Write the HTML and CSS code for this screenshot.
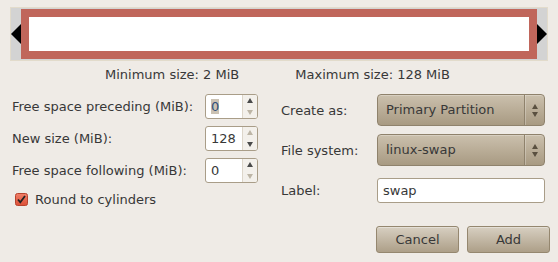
FILE: index.html
```html
<!DOCTYPE html>
<html lang="en">
<head>
    <meta charset="UTF-8">
    <title>Create new Partition</title>
    <link rel="stylesheet" href="styles.css">
</head>
<body>
    <div class="bar">
        <div class="handle">
            <svg width="10" height="20" viewBox="0 0 10 20"><polygon points="10,0 10,20 0,10" fill="#000"/></svg>
        </div>
        <div class="partition"></div>
        <div class="handle">
            <svg width="10" height="20" viewBox="0 0 10 20"><polygon points="0,0 0,20 10,10" fill="#000"/></svg>
        </div>
    </div>

    <div class="limits">
        <span>Minimum size: 2 MiB</span>
        <span>Maximum size: 128 MiB</span>
    </div>

    <div class="form">
        <div class="col-left">
            <div class="grid-left">
                <label>Free space preceding (MiB):</label>
                <div class="spin">
                    <span class="spin-value"><span class="selected">0</span></span>
                    <span class="spin-arrows"><i class="up"></i><i class="down off"></i></span>
                </div>
                <label>New size (MiB):</label>
                <div class="spin">
                    <span class="spin-value">128</span>
                    <span class="spin-arrows"><i class="up off"></i><i class="down"></i></span>
                </div>
                <label>Free space following (MiB):</label>
                <div class="spin">
                    <span class="spin-value">0</span>
                    <span class="spin-arrows"><i class="up"></i><i class="down off"></i></span>
                </div>
            </div>
            <div class="check">
                <svg width="13" height="13" viewBox="0 0 13 13">
                    <defs>
                        <linearGradient id="cb" x1="0" y1="0" x2="0" y2="1">
                            <stop offset="0" stop-color="#f0806a"/>
                            <stop offset="1" stop-color="#dc4f36"/>
                        </linearGradient>
                    </defs>
                    <rect x="0.5" y="0.5" width="12" height="12" rx="2" fill="url(#cb)" stroke="#b8432e"/>
                    <path d="M3 6.5 L5.3 9.3 L10 3" fill="none" stroke="#222" stroke-width="1.8"/>
                </svg>
                <span>Round to cylinders</span>
            </div>
        </div>

        <div class="col-right">
            <div class="grid-right">
                <label>Create as:</label>
                <div class="combo">
                    <span class="combo-text">Primary Partition</span>
                    <span class="combo-arrows"><i class="up"></i><i class="down"></i></span>
                </div>
                <label>File system:</label>
                <div class="combo">
                    <span class="combo-text">linux-swap</span>
                    <span class="combo-arrows"><i class="up"></i><i class="down"></i></span>
                </div>
                <label class="label-row">Label:</label>
                <div class="entry label-row">swap</div>
            </div>
        </div>
    </div>

    <div class="actions">
        <button>Cancel</button>
        <button>Add</button>
    </div>
</body>
</html>
```

FILE: styles.css
```css
body {
    margin: 0;
    background-color: #efebe6;
    font-family: "DejaVu Sans", sans-serif;
    font-size: 13px;
    color: #383838;
}
.bar {
    display: flex;
    margin: 7px 10px 0 10px;
    height: 54px;
    box-sizing: border-box;
    border: 1px solid #e2dbcb;
    background-color: #d3d3d3;
}
.handle {
    width: 10px;
    display: flex;
    align-items: center;
}
.partition {
    flex: 1;
    margin: 1px 0;
    border: 8px solid #c0665b;
    background-color: #fff;
}
.limits {
    display: flex;
    gap: 56px;
    margin: 6px 0 0 105px;
    line-height: 16px;
}
.form {
    display: flex;
    margin-top: 11px;
}
.col-left {
    width: 269px;
    padding-left: 12px;
}
.grid-left {
    display: grid;
    grid-template-columns: 193px 53px;
    grid-auto-rows: 25px;
    row-gap: 7px;
    align-items: center;
}
.grid-right {
    display: grid;
    grid-template-columns: 96px 168px;
    grid-template-rows: 32px 32px 25px;
    row-gap: 8px;
    align-items: center;
}
.label-row {
    margin-top: 8px;
}
.spin {
    display: flex;
    height: 25px;
    box-sizing: border-box;
    border: 1px solid #a99d88;
    border-radius: 3px;
    background-color: #fff;
    overflow: hidden;
}
.spin-value {
    flex: 1;
    padding-left: 5px;
    line-height: 23px;
}
.selected {
    background-color: #cbc2b3;
    color: #2f4f7a;
}
.spin-arrows {
    width: 14px;
    border-left: 1px solid #ddd6ca;
    background-color: #f3f0eb;
    display: flex;
    flex-direction: column;
    align-items: center;
    justify-content: center;
    gap: 7px;
}
.up, .down {
    display: block;
    width: 0;
    height: 0;
    border-left: 3px solid transparent;
    border-right: 3px solid transparent;
}
.up {
    border-bottom: 5px solid #4a4a4a;
}
.down {
    border-top: 5px solid #4a4a4a;
}
.up.off {
    border-bottom-color: #bdb5a6;
}
.down.off {
    border-top-color: #bdb5a6;
}
.check {
    display: flex;
    align-items: center;
    gap: 7px;
    margin: 10px 0 0 3px;
    height: 13px;
}
.check svg {
    flex: none;
}
.combo {
    display: flex;
    height: 32px;
    box-sizing: border-box;
    border: 1px solid #8f826c;
    border-radius: 4px;
    background: linear-gradient(#cbc0ad, #a89a82);
    box-shadow: inset 0 1px rgba(255, 255, 255, 0.25);
}
.combo-text {
    flex: 1;
    padding-left: 8px;
    line-height: 30px;
}
.combo-arrows {
    width: 19px;
    border-left: 1px solid #8f826c;
    box-shadow: inset 1px 0 rgba(255, 255, 255, 0.25);
    display: flex;
    flex-direction: column;
    align-items: center;
    justify-content: center;
    gap: 3px;
}
.combo-arrows .up {
    border-bottom-color: #5a5040;
}
.combo-arrows .down {
    border-top-color: #5a5040;
}
.entry {
    height: 25px;
    box-sizing: border-box;
    border: 1px solid #a99d88;
    border-radius: 3px;
    background-color: #fff;
    padding-left: 5px;
    line-height: 23px;
}
.actions {
    display: flex;
    justify-content: flex-end;
    gap: 8px;
    margin: 20px 8px 0 0;
}
button {
    width: 83px;
    height: 27px;
    border: 1px solid #95876f;
    border-radius: 3px;
    background: linear-gradient(#d7cfc1, #ad9f88);
    box-shadow: inset 0 1px rgba(255, 255, 255, 0.35);
    font-family: "DejaVu Sans", sans-serif;
    font-size: 13px;
    color: #383838;
    padding: 0;
}
```
